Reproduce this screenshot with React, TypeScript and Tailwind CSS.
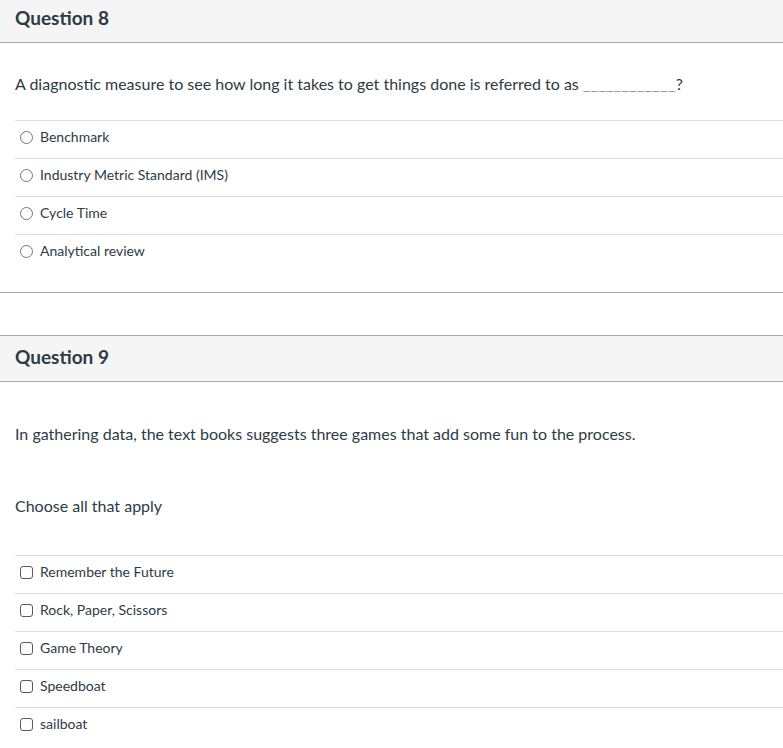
const font = { fontFamily: "Lato, 'Open Sans', sans-serif" };

type Choice = { label: string };

const q8Choices: Choice[] = [
  { label: "Benchmark" },
  { label: "Industry Metric Standard (IMS)" },
  { label: "Cycle Time" },
  { label: "Analytical review" },
];

const q9Choices: Choice[] = [
  { label: "Remember the Future" },
  { label: "Rock, Paper, Scissors" },
  { label: "Game Theory" },
  { label: "Speedboat" },
  { label: "sailboat" },
];

const Radio = () => (
  <span className="block w-[13px] h-[13px] rounded-full border border-[#777] bg-white shrink-0" />
);

const Checkbox = () => (
  <span className="block w-[13px] h-[13px] rounded-[3px] border border-[#5a5a5a] bg-white shrink-0" />
);

const AnswerRow = ({ label, multi }: { label: string; multi?: boolean }) => (
  <div className="h-[38px] border-t border-[#dcdcdc] flex items-center gap-[7px] pl-[5px] pb-[5px]">
    {multi ? <Checkbox /> : <Radio />}
    <span className="text-[14px] text-[#2d3b45] leading-none">{label}</span>
  </div>
);

const QuestionHeader = ({ title, top }: { title: string; top?: boolean }) => (
  <div
    className={
      top
        ? "h-[43px] bg-[#f5f5f5] border-b border-[#a8a8a8] flex items-center px-[15px] pb-[8px]"
        : "h-[47px] bg-[#f5f5f5] border-y border-[#a8a8a8] flex items-center px-[15px] pb-[5px]"
    }
  >
    <h3 className="text-[19px] font-bold text-[#2d3b45] leading-none">{title}</h3>
  </div>
);

export default function App() {
  return (
    <div className="w-[783px] min-h-[748px] bg-white overflow-hidden" style={font}>
      {/* question 8 */}
      <div className="border-b border-[#a8a8a8]">
        <QuestionHeader title="Question 8" top />
        <div className="pl-[15px] pb-[20px]">
          <div className="h-[77px] flex items-center pt-[5px]">
            <p className="text-[16px] text-[#2d3b45]">
              A diagnostic measure to see how long it takes to get things done is referred to as{" "}
              <span className="text-[#999] tracking-[0.4px]">____________</span>?
            </p>
          </div>
          {q8Choices.map((c) => (
            <AnswerRow key={c.label} label={c.label} />
          ))}
        </div>
      </div>

      <div className="h-[42px]" />

      {/* question 9 */}
      <div>
        <QuestionHeader title="Question 9" />
        <div className="pl-[15px]">
          <div className="h-[173px] flex flex-col justify-center pt-[2px]">
            <p className="text-[16px] text-[#2d3b45]">
              In gathering data, the text books suggests three games that add some fun to the process.
            </p>
            <p className="text-[16px] text-[#2d3b45] mt-[48px]">Choose all that apply</p>
          </div>
          {q9Choices.map((c) => (
            <AnswerRow key={c.label} label={c.label} multi />
          ))}
        </div>
      </div>
    </div>
  );
}
